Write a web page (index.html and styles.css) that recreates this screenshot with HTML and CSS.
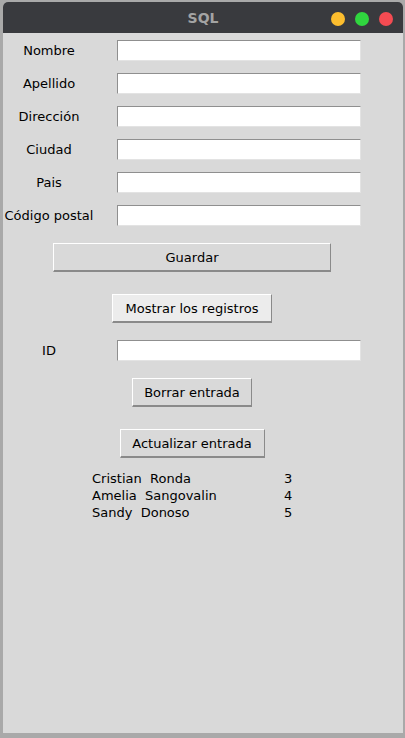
FILE: index.html
```html
<!DOCTYPE html>
<html lang="es">
<head>
<meta charset="utf-8">
<title>SQL</title>
<link rel="stylesheet" href="styles.css">
</head>
<body>
<div class="window">
  <div class="titlebar">
    <span></span>
    <span class="title">SQL</span>
    <div class="lights">
      <span class="dot yellow"></span>
      <span class="dot green"></span>
      <span class="dot red"></span>
    </div>
  </div>
  <div class="content">
    <div class="form">
      <div class="row"><span class="label">Nombre</span><input class="entry" type="text"></div>
      <div class="row"><span class="label">Apellido</span><input class="entry" type="text"></div>
      <div class="row"><span class="label">Dirección</span><input class="entry" type="text"></div>
      <div class="row"><span class="label">Ciudad</span><input class="entry" type="text"></div>
      <div class="row"><span class="label">Pais</span><input class="entry" type="text"></div>
      <div class="row"><span class="label">Código postal</span><input class="entry" type="text"></div>
    </div>
    <button class="btn btn-save">Guardar</button>
    <button class="btn btn-show">Mostrar los registros</button>
    <div class="row id-row"><span class="label">ID</span><input class="entry" type="text"></div>
    <button class="btn btn-delete">Borrar entrada</button>
    <button class="btn btn-update">Actualizar entrada</button>
    <div class="records">
      <span>Cristian&nbsp; Ronda</span><span>3</span>
      <span>Amelia&nbsp; Sangovalin</span><span>4</span>
      <span>Sandy&nbsp; Donoso</span><span>5</span>
    </div>
  </div>
</div>
</body>
</html>
```
FILE: styles.css
```css
html, body {
  margin: 0;
  padding: 0;
}
body {
  background: #a9a9a9;
  width: 405px;
  height: 738px;
  overflow: hidden;
  font-family: "DejaVu Sans", sans-serif;
  font-size: 13px;
  color: #000;
}
.window {
  margin: 2px 2px 0 3px;
  width: 400px;
  height: 731px;
  background: #d9d9d9;
  border-radius: 5px 5px 0 0;
  overflow: hidden;
}
.titlebar {
  height: 31px;
  background: #393a3e;
  display: grid;
  grid-template-columns: 1fr auto 1fr;
  align-items: center;
}
.title {
  font-weight: bold;
  font-size: 14px;
  color: #a3a3a3;
  padding-top: 1px;
}
.lights {
  display: flex;
  justify-content: flex-end;
  gap: 10px;
  padding-right: 10px;
  padding-top: 2px;
}
.dot {
  width: 14px;
  height: 14px;
  border-radius: 50%;
}
.yellow { background: #fcbd2e; }
.green { background: #30d63f; }
.red { background: #f44b52; }
.content {
  width: 378px;
  display: flex;
  flex-direction: column;
  align-items: center;
}
.form {
  align-self: stretch;
  padding-top: 7px;
  display: flex;
  flex-direction: column;
  gap: 12px;
}
.row {
  display: flex;
  align-items: center;
  height: 21px;
  align-self: stretch;
}
.label {
  width: 92px;
  text-align: center;
  white-space: nowrap;
  line-height: 17px;
}
.entry {
  margin-left: 22px;
  width: 244px;
  height: 21px;
  box-sizing: border-box;
  background: #fff;
  border: 1px solid;
  border-color: #8f8f8f #e3e3e3 #e3e3e3 #8f8f8f;
  padding: 0 2px;
  font: inherit;
  outline: none;
}
.btn {
  height: 29px;
  box-sizing: border-box;
  background: #d9d9d9;
  border: 1px solid;
  border-color: #ffffff #8a8a8a #8a8a8a #ffffff;
  border-width: 1px 1px 2px 1px;
  font: inherit;
  color: #000;
  padding: 0;
  line-height: 25px;
}
.btn-save {
  margin-top: 17px;
  width: 278px;
}
.btn-show {
  margin-top: 22px;
  width: 160px;
  background: #ececec;
}
.id-row {
  margin-top: 17px;
}
.btn-delete {
  margin-top: 17px;
  width: 120px;
}
.btn-update {
  margin-top: 22px;
  width: 145px;
}
.records {
  align-self: stretch;
  margin-top: 12px;
  margin-left: 89px;
  display: grid;
  grid-template-columns: 192px auto;
  line-height: 17px;
  white-space: nowrap;
}
```
